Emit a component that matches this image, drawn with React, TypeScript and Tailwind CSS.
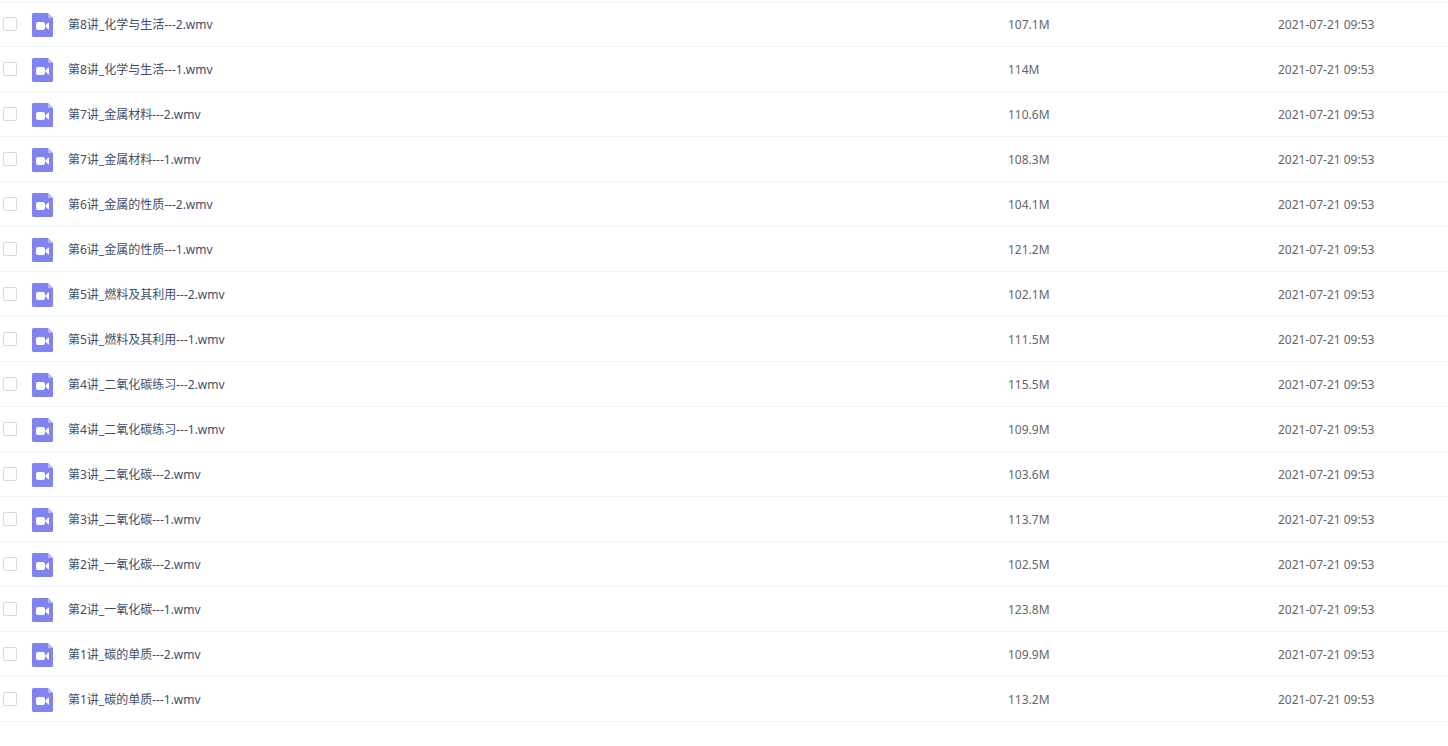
type VideoFile = { name: string; size: string; date: string };

const DATE = '2021-07-21 09:53';

const files: VideoFile[] = [
  { name: '第8讲_化学与生活---2.wmv', size: '107.1M', date: DATE },
  { name: '第8讲_化学与生活---1.wmv', size: '114M', date: DATE },
  { name: '第7讲_金属材料---2.wmv', size: '110.6M', date: DATE },
  { name: '第7讲_金属材料---1.wmv', size: '108.3M', date: DATE },
  { name: '第6讲_金属的性质---2.wmv', size: '104.1M', date: DATE },
  { name: '第6讲_金属的性质---1.wmv', size: '121.2M', date: DATE },
  { name: '第5讲_燃料及其利用---2.wmv', size: '102.1M', date: DATE },
  { name: '第5讲_燃料及其利用---1.wmv', size: '111.5M', date: DATE },
  { name: '第4讲_二氧化碳练习---2.wmv', size: '115.5M', date: DATE },
  { name: '第4讲_二氧化碳练习---1.wmv', size: '109.9M', date: DATE },
  { name: '第3讲_二氧化碳---2.wmv', size: '103.6M', date: DATE },
  { name: '第3讲_二氧化碳---1.wmv', size: '113.7M', date: DATE },
  { name: '第2讲_一氧化碳---2.wmv', size: '102.5M', date: DATE },
  { name: '第2讲_一氧化碳---1.wmv', size: '123.8M', date: DATE },
  { name: '第1讲_碳的单质---2.wmv', size: '109.9M', date: DATE },
  { name: '第1讲_碳的单质---1.wmv', size: '113.2M', date: DATE },
];

function VideoIcon() {
  return (
    <svg width="21" height="24" viewBox="0 0 21 24" className="block shrink-0" aria-hidden="true">
      <path d="M1.5 0H16l5 5v17.5a1.5 1.5 0 0 1-1.5 1.5h-18A1.5 1.5 0 0 1 0 22.5v-21A1.5 1.5 0 0 1 1.5 0z" fill="#8183f1" />
      <path d="M16 0l5 5h-4a1 1 0 0 1-1-1z" fill="#b8b9f8" />
      <rect x="4" y="9" width="9" height="8" rx="2" fill="#fff" />
      <path d="M13.5 12.5v1L16 16.2q1 .7 1-.4v-5.6q0-1.1-1-.4z" fill="#fff" />
    </svg>
  );
}

function FileRow({ file, id }: { file: VideoFile; id: string }) {
  return (
    <tr className="h-[45px] first:shadow-[inset_0_1px_0_#f0f5fe]">
      <td className="border-b border-[#f0f5fe] p-0 pl-[3px]">
        <input
          id={id}
          type="checkbox"
          className="block size-3.5 appearance-none rounded-xs border border-[#d5dbe3] bg-white checked:border-[#8183f1] checked:bg-[#8183f1]"
        />
      </td>
      <td className="border-b border-[#f0f5fe] p-0">
        <label htmlFor={id} className="flex items-center gap-[15px] pt-1 pb-0.5 text-[#424e67]">
          <VideoIcon />
          <span>{file.name}</span>
        </label>
      </td>
      <td className="border-b border-[#f0f5fe] p-0 pt-0.5 text-[#666]">{file.size}</td>
      <td className="border-b border-[#f0f5fe] p-0 pt-0.5 text-[#666]">{file.date}</td>
    </tr>
  );
}

export default function App() {
  return (
    <main className="min-h-screen bg-white pt-0.5 font-['Noto_Sans','Noto_Sans_CJK_SC',sans-serif] text-xs">
      <table className="w-full table-fixed border-separate border-spacing-0">
        <colgroup>
          <col className="w-8" />
          <col />
          <col className="w-[270px]" />
          <col className="w-[170px]" />
        </colgroup>
        <tbody>
          {files.map((file, i) => (
            <FileRow key={file.name} file={file} id={`file-${i}`} />
          ))}
        </tbody>
      </table>
    </main>
  );
}
